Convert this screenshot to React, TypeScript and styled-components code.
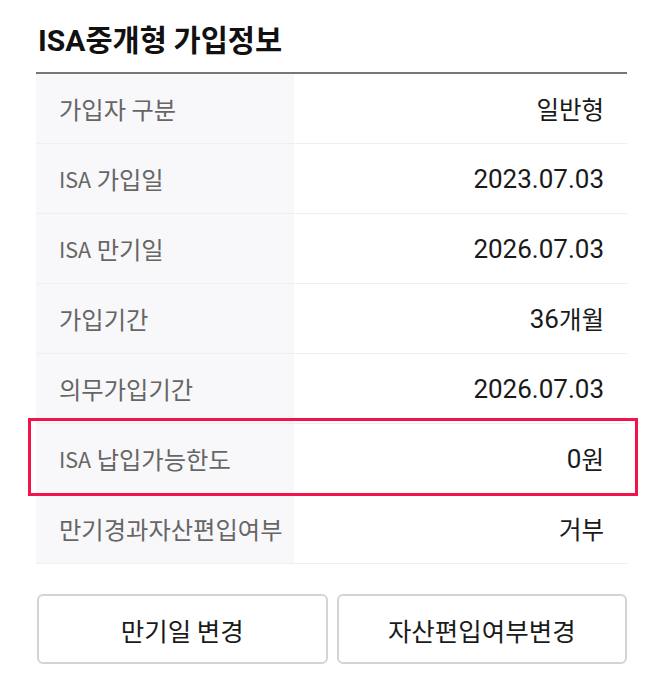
import React from "react";
import styled, { createGlobalStyle } from "styled-components";

const Global = createGlobalStyle`
  html, body { margin: 0; padding: 0; background: #fff; }
  body { font-family: "Noto Sans CJK KR", "Noto Sans", sans-serif; }
  * { box-sizing: border-box; }
`;

const KR = `"Noto Sans CJK KR", "Noto Sans", sans-serif`;

const Page = styled.div`
  width: 666px;
  padding: 18px 39px 0 36px;
  display: flex;
  flex-direction: column;
`;

const Title = styled.h2`
  margin: 0;
  padding-left: 2px;
  height: 54px;
  font-family: ${KR};
  font-size: 29.5px;
  font-weight: 700;
  color: #111;
  line-height: 40px;
`;

const Latin = styled.span<{ $font: string; $size: string; $weight?: number }>`
  font-family: ${(p) => p.$font};
  font-size: ${(p) => p.$size};
  ${(p) => (p.$weight ? `font-weight: ${p.$weight};` : "")}
`;

const Table = styled.div`
  border-top: 2px solid #777;
  display: flex;
  flex-direction: column;
`;

const Row = styled.div<{ $highlight?: boolean }>`
  position: relative;
  display: grid;
  grid-template-columns: 258px 1fr;
  height: 70px;
  border-bottom: 1px solid #efeff1;
`;

const Label = styled.div`
  background: #f8f8fa;
  display: flex;
  align-items: center;
  padding-left: 23px;
  font-family: ${KR};
  font-size: 24.3px;
  color: #666;
  white-space: pre;
`;

const Value = styled.div`
  display: flex;
  align-items: center;
  justify-content: flex-end;
  padding-right: 23px;
  font-family: ${KR};
  font-size: 24.5px;
  color: #1a1a1a;
  white-space: pre;
`;

const Highlight = styled.div`
  position: absolute;
  z-index: 1;
  left: -8px;
  right: -11px;
  top: -6px;
  bottom: -3px;
  border: 3px solid #f0144a;
  pointer-events: none;
`;

const Buttons = styled.div`
  display: grid;
  grid-template-columns: 1fr 1fr;
  gap: 9px;
  margin-top: 30px;
  padding-left: 1px;
`;

const Button = styled.button`
  height: 70px;
  background: #fff;
  border: 2px solid #d4d4d8;
  border-radius: 6px;
  font-family: ${KR};
  font-size: 25.5px;
  color: #1a1a1a;
  padding: 0;
  white-space: pre;
`;

type LatinStyle = { font: string; size: string; weight?: number };

function Mixed({ text, latin }: { text: string; latin: LatinStyle }) {
  const parts = text.match(/[A-Za-z0-9.]+|[^A-Za-z0-9.]+/g) ?? [];
  return (
    <>
      {parts.map((p, i) =>
        /^[A-Za-z0-9.]+$/.test(p) ? (
          <Latin key={i} $font={latin.font} $size={latin.size} $weight={latin.weight}>
            {p}
          </Latin>
        ) : (
          <React.Fragment key={i}>{p}</React.Fragment>
        )
      )}
    </>
  );
}

const labelLatin: LatinStyle = { font: KR, size: "21.5px" };
const valueLatin: LatinStyle = { font: `Roboto, ${KR}`, size: "26px" };
const titleLatin: LatinStyle = { font: `Roboto, ${KR}`, size: "30px", weight: 700 };

const rows: { label: string; value: string; highlight?: boolean }[] = [
  { label: "가입자 구분", value: "일반형" },
  { label: "ISA 가입일", value: "2023.07.03" },
  { label: "ISA 만기일", value: "2026.07.03" },
  { label: "가입기간", value: "36개월" },
  { label: "의무가입기간", value: "2026.07.03" },
  { label: "ISA 납입가능한도", value: "0원", highlight: true },
  { label: "만기경과자산편입여부", value: "거부" },
];

export default function App() {
  return (
    <>
      <Global />
      <Page>
        <Title>
          <Mixed text="ISA중개형 가입정보" latin={titleLatin} />
        </Title>
        <Table>
          {rows.map((r) => (
            <Row key={r.label}>
              <Label>
                <Mixed text={r.label} latin={labelLatin} />
              </Label>
              <Value>
                <Mixed text={r.value} latin={valueLatin} />
              </Value>
              {r.highlight && <Highlight />}
            </Row>
          ))}
        </Table>
        <Buttons>
          <Button>만기일 변경</Button>
          <Button>자산편입여부변경</Button>
        </Buttons>
      </Page>
    </>
  );
}
